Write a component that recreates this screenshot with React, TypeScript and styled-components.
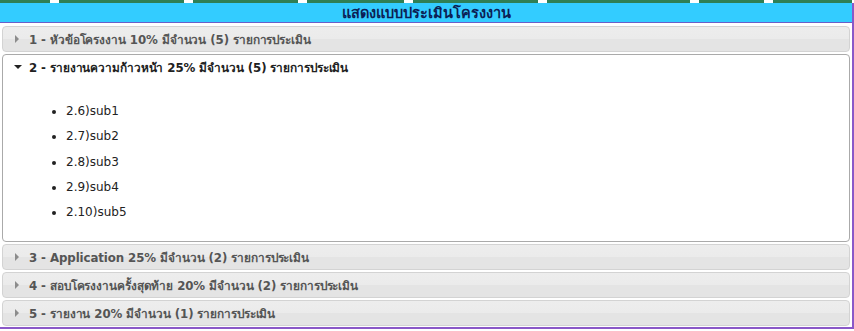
import React, { useState } from 'react'
import styled, { createGlobalStyle } from 'styled-components'

const GlobalStyle = createGlobalStyle`
  html, body {
    margin: 0;
    padding: 0;
    background: #ffffff;
  }
  body {
    font-family: Tahoma, "DejaVu Sans", "Noto Sans", sans-serif;
  }
`

const Page = styled.div`
  width: 854px;
  height: 331px;
  overflow: hidden;
`

const TabStrip = styled.div`
  display: flex;
  gap: 9px;
  height: 3px;
`

const Tab = styled.div<{ $w: number }>`
  width: ${p => p.$w}px;
  flex: none;
  background: #2f7f55;
`

const Frame = styled.div`
  width: 852px;
  border-right: 2px solid #8a58c8;
  border-bottom: 2px solid #8a58c8;
  padding-bottom: 1px;
`

const TitleBar = styled.div`
  height: 19px;
  background: #33ccff;
  border-bottom: 1px solid #6a5fc8;
  display: flex;
  align-items: center;
  justify-content: center;
  font-family: Tahoma, "DejaVu Sans", "Noto Sans", sans-serif;
  font-weight: bold;
  font-size: 14.5px;
  color: #0c1f55;
`

const Accordion = styled.div`
  display: flex;
  flex-direction: column;
  gap: 2px;
  padding: 3px 2px 0 2px;
`

const Section = styled.div<{ $open: boolean }>`
  border: 1px solid ${p => (p.$open ? '#aaaaaa' : '#d3d3d3')};
  border-radius: 4px;
  background: ${p =>
    p.$open ? '#ffffff' : 'linear-gradient(to bottom, #ededed 0%, #ebebeb 50%, #e4e4e4 50%, #e4e4e4 100%)'};
`

const Header = styled.div<{ $open: boolean }>`
  height: 24px;
  display: flex;
  align-items: center;
  gap: 7px;
  padding-left: 11px;
  cursor: pointer;
  font-family: Tahoma, "DejaVu Sans", "Noto Sans", sans-serif;
  font-weight: bold;
  font-size: 11.8px;
  letter-spacing: -0.1px;
  color: ${p => (p.$open ? '#212121' : '#555555')};
`

const Arrow = styled.span<{ $open: boolean }>`
  width: 0;
  height: 0;
  flex: none;
  ${p =>
    p.$open
      ? `border-left: 4px solid transparent;
         border-right: 4px solid transparent;
         border-top: 4px solid #222222;`
      : `border-top: 4px solid transparent;
         border-bottom: 4px solid transparent;
         border-left: 4px solid #8c8c8c;
         margin-left: 1px;
         margin-right: 3px;`}
`

const Content = styled.div`
  padding: 20px 24px 16px 24px;
`

const SubList = styled.ul`
  margin: 0;
  padding-left: 39px;
  list-style: disc;
`

const SubItem = styled.li`
  line-height: 25.25px;
  font-family: Tahoma, "DejaVu Sans", "Noto Sans", sans-serif;
  font-size: 12px;
  color: #222222;
`

const tabs = [50, 125, 105, 97, 125, 143, 65, 79]

const sections = [
  { title: '1 - หัวข้อโครงงาน 10% มีจำนวน (5) รายการประเมิน', subs: ['1.1)sub1', '1.2)sub2', '1.3)sub3', '1.4)sub4', '1.5)sub5'] },
  { title: '2 - รายงานความก้าวหน้า 25% มีจำนวน (5) รายการประเมิน', subs: ['2.6)sub1', '2.7)sub2', '2.8)sub3', '2.9)sub4', '2.10)sub5'] },
  { title: '3 - Application 25% มีจำนวน (2) รายการประเมิน', subs: ['3.11)sub1', '3.12)sub2'] },
  { title: '4 - สอบโครงงานครั้งสุดท้าย 20% มีจำนวน (2) รายการประเมิน', subs: ['4.13)sub1', '4.14)sub2'] },
  { title: '5 - รายงาน 20% มีจำนวน (1) รายการประเมิน', subs: ['5.15)sub1'] },
]

export default function App() {
  const [open, setOpen] = useState(1)

  return (
    <>
      <GlobalStyle />
      <Page>
        <TabStrip>
          {tabs.map((w, i) => (
            <Tab key={i} $w={w} />
          ))}
        </TabStrip>
        <Frame>
          <TitleBar>แสดงแบบประเมินโครงงาน</TitleBar>
          <Accordion>
            {sections.map((s, i) => (
              <Section key={i} $open={open === i}>
                <Header $open={open === i} onClick={() => setOpen(open === i ? -1 : i)}>
                  <Arrow $open={open === i} />
                  {s.title}
                </Header>
                {open === i && (
                  <Content>
                    <SubList>
                      {s.subs.map(sub => (
                        <SubItem key={sub}>{sub}</SubItem>
                      ))}
                    </SubList>
                  </Content>
                )}
              </Section>
            ))}
          </Accordion>
        </Frame>
      </Page>
    </>
  )
}
